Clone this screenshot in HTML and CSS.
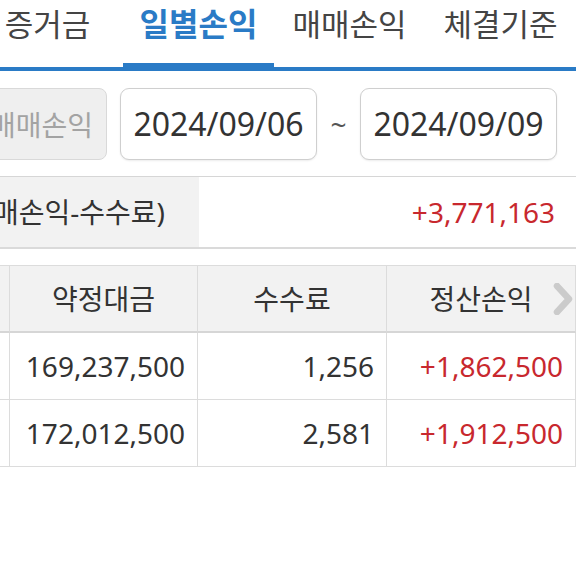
FILE: index.html
```html
<!DOCTYPE html>
<html lang="ko">
<head>
<meta charset="utf-8">
<link rel="stylesheet" href="styles.css">
</head>
<body>
<div class="screen">
  <nav class="tabs">
    <div class="tab">증거금</div>
    <div class="tab active">일별손익</div>
    <div class="tab">매매손익</div>
    <div class="tab">체결기준</div>
  </nav>
  <div class="filters">
    <button class="mode-btn">매매손익</button>
    <div class="date-box">2024/09/06</div>
    <span class="tilde">~</span>
    <div class="date-box">2024/09/09</div>
  </div>
  <div class="summary">
    <div class="summary-label">(정산손익=매매손익-수수료)</div>
    <div class="summary-value up">+3,771,163</div>
  </div>
  <div class="table-wrap">
    <div class="grid">
      <div class="cell head c1">일자</div>
      <div class="cell head">약정대금</div>
      <div class="cell head">수수료</div>
      <div class="cell head">정산손익</div>

      <div class="cell c1">09/09</div>
      <div class="cell num">169,237,500</div>
      <div class="cell num">1,256</div>
      <div class="cell num up">+1,862,500</div>

      <div class="cell c1">09/06</div>
      <div class="cell num">172,012,500</div>
      <div class="cell num">2,581</div>
      <div class="cell num up">+1,912,500</div>
    </div>
    <svg class="scroll-arrow" viewBox="0 0 24 32" width="24" height="32">
      <path d="M6 3 L18 16 L6 29" fill="none" stroke="#cbcbcb" stroke-width="6.5" stroke-linecap="round" stroke-linejoin="round"/>
    </svg>
  </div>
</div>
</body>
</html>
```

FILE: styles.css
```css
* { box-sizing: border-box; }
html, body {
  margin: 0;
  padding: 0;
  background: #fff;
  overflow: hidden;
}
body {
  width: 576px;
  height: 576px;
  font-family: "Noto Sans", "Noto Sans CJK KR", sans-serif;
  color: #333;
}
.screen {
  width: 576px;
  overflow: hidden;
}

/* Tabs */
.tabs {
  display: flex;
  margin-left: -28px;
  height: 71px;
  border-bottom: 4px solid #2a7bc6;
}
.tab {
  flex: 0 0 151px;
  text-align: center;
  font-size: 31px;
  line-height: 46px;
  padding-top: 1px;
  color: #444;
  position: relative;
  white-space: nowrap;
}
.tab.active {
  color: #2a7bc6;
  font-weight: 700;
  font-size: 32px;
}
.tab.active::after {
  content: "";
  position: absolute;
  left: 0;
  right: 0;
  bottom: -4px;
  height: 8px;
  background: #2a7bc6;
}

/* Filters */
.filters {
  display: flex;
  align-items: flex-start;
  margin-left: -60px;
  padding-top: 17px;
  height: 106px;
  border-bottom: 1px solid #d6d6d6;
}
.mode-btn {
  flex: 0 0 167px;
  height: 72px;
  border: 1px solid #d9d9d9;
  border-radius: 8px;
  background: #efefef;
  color: #a3a3a3;
  font-family: inherit;
  font-size: 28px;
  text-align: right;
  padding: 0 13px 0 0;
  margin-right: 13px;
}
.date-box {
  flex: 0 0 197px;
  height: 72px;
  border: 1px solid #cfcfcf;
  border-radius: 9px;
  background: #fff;
  box-shadow: 0 1px 2px rgba(0,0,0,0.08);
  font-size: 32px;
  line-height: 70px;
  text-align: center;
  color: #333;
}
.tilde {
  flex: 0 0 43px;
  text-align: center;
  font-size: 28px;
  line-height: 72px;
  color: #555;
}

/* Summary */
.summary {
  display: flex;
  height: 72px;
  border-bottom: 2px solid #dadada;
}
.summary-label {
  width: 199px;
  background: #f2f2f2;
  font-size: 28px;
  line-height: 70px;
  white-space: nowrap;
  overflow: hidden;
  display: flex;
  justify-content: flex-end;
  padding-right: 34px;
  color: #333;
}
.summary-value {
  flex: 1;
  text-align: right;
  font-size: 28px;
  line-height: 70px;
  padding-right: 21px;
}
.up { color: #c8282e; }

/* Table */
.table-wrap {
  position: relative;
  margin-top: 16px;
}
.grid {
  display: grid;
  grid-template-columns: 189px 188px 189px 189px;
  margin-left: -179px;
  border-top: 1px solid #dcdcdc;
}
.cell {
  height: 67px;
  border-bottom: 1px solid #dcdcdc;
  border-right: 1px solid #dcdcdc;
  font-size: 28px;
  line-height: 66px;
  text-align: center;
  white-space: nowrap;
}
.cell.head {
  background: #f2f2f2;
  border-bottom: 2px solid #d6d6d6;
}
.cell.num {
  text-align: right;
  padding-right: 12px;
}
.scroll-arrow {
  position: absolute;
  right: 1px;
  top: 18px;
}
```
